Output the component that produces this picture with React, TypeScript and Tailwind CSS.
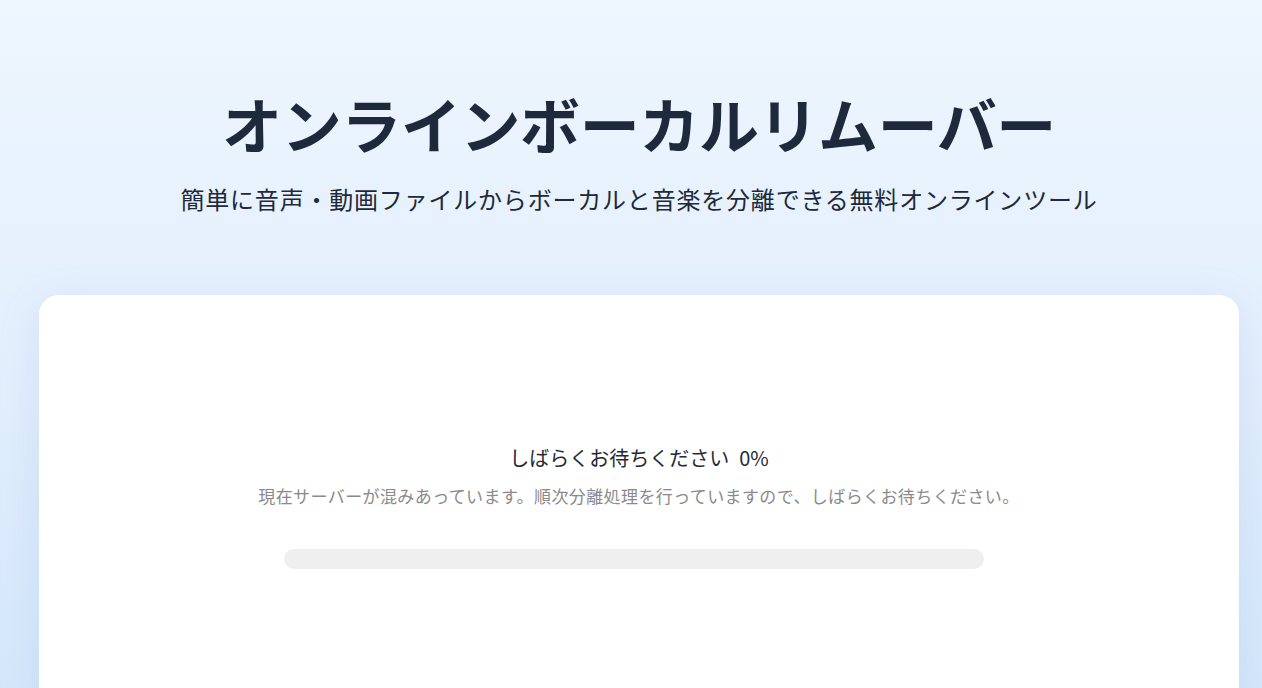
export default function App() {
  const progress = 0;

  return (
    <div
      className="min-h-screen w-full bg-gradient-to-b from-[#eef6fe] via-[#e3effd] to-[#d4e7fb] pl-[16px]"
      style={{ fontFamily: '"Noto Sans CJK JP", "Noto Sans", sans-serif' }}
    >
      {/* ---- Header ---- */}
      <header className="flex flex-col items-center pt-[87px]">
        <h1 className="text-[60px] font-bold leading-[1.2] tracking-[-0.4px] text-[#1e293b]">
          オンラインボーカルリムーバー
        </h1>
        <p className="mt-[22px] text-[24px] leading-[1.5] tracking-[0.8px] text-[#1e293b]">
          簡単に音声・動画ファイルからボーカルと音楽を分離できる無料オンラインツール
        </p>
      </header>

      {/* ---- Card: processing status ---- */}
      <main className="mt-[78px] flex justify-center">
        <div className="w-[1200px] min-h-[420px] rounded-[20px] bg-white shadow-[0_10px_40px_rgba(120,160,210,0.18)] pt-[148px] pb-[120px] flex flex-col items-center">
          <p className="text-[20px] leading-[1.5] text-[#1f2937]">
            しばらくお待ちください<span className="ml-[10px]">{progress}%</span>
          </p>
          <p className="mt-[10px] text-[17px] leading-[1.5] tracking-[0.4px] text-[#8a8a8a]">
            現在サーバーが混みあっています。順次分離処理を行っていますので、しばらくお待ちください。
          </p>
          <div className="mt-[40px] mr-[10px] h-[20px] w-[700px] rounded-full bg-[#efefef] overflow-hidden">
            <div
              className="h-full rounded-full bg-[#3b82f6]"
              style={{ width: `${progress}%` }}
            />
          </div>
        </div>
      </main>
    </div>
  );
}
